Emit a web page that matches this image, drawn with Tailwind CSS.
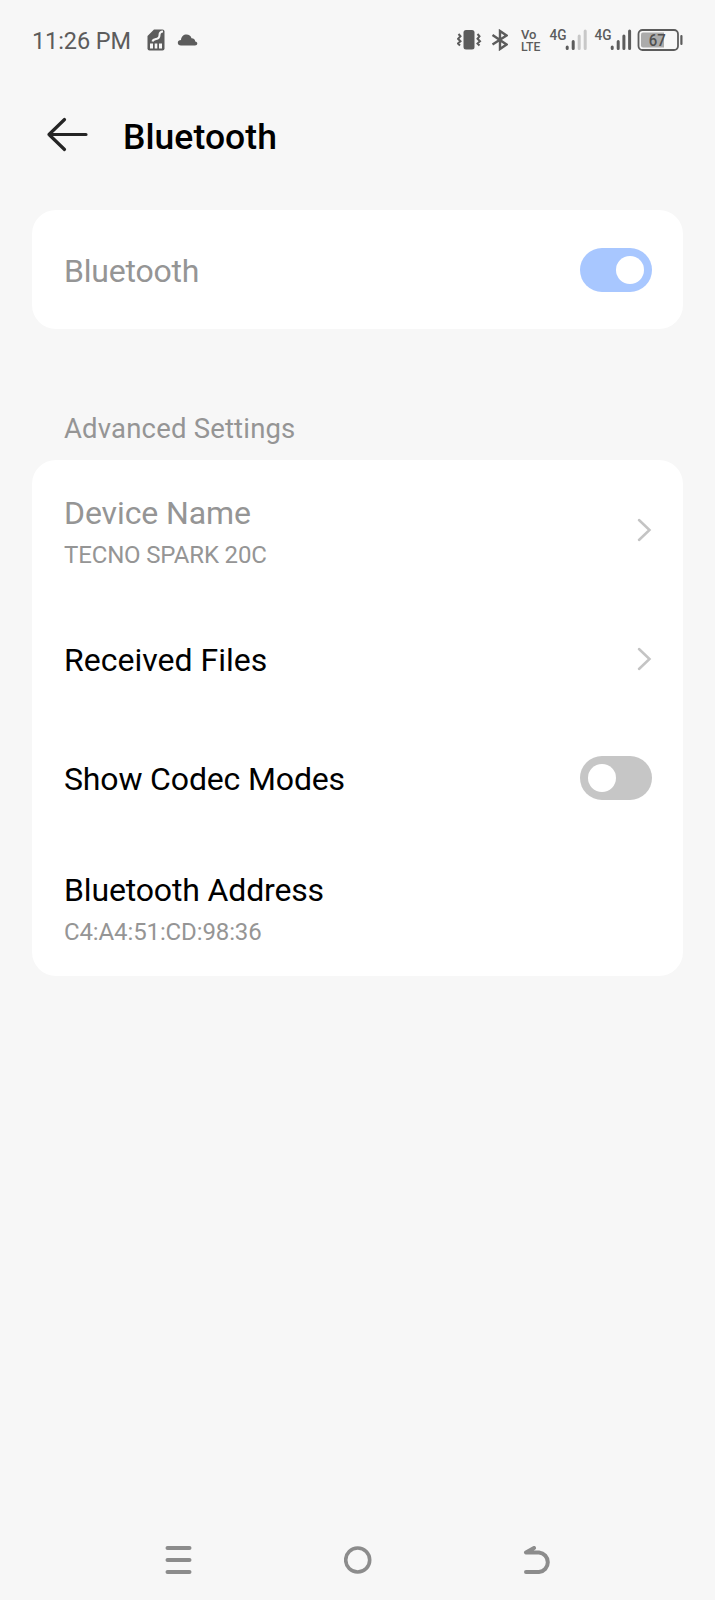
<!DOCTYPE html>
<html lang="en">
<head>
    <meta charset="UTF-8">
    <meta name="viewport" content="width=device-width, initial-scale=1.0">
    <title>Bluetooth</title>
    <script src="https://cdn.jsdelivr.net/npm/@tailwindcss/browser@4"></script>
</head>
<body class="bg-[#f7f7f7] font-[Roboto,sans-serif] text-black">
    <div class="h-[1600px] flex flex-col overflow-hidden">
        <!-- Status bar -->
        <div class="h-20 pl-8 pr-8 flex items-center text-[#5c5c5c]">
            <span class="pt-0.5 text-[23.5px] leading-8 tracking-[-0.1px] w-[115px] whitespace-nowrap">11:26 PM</span>
            <svg class="w-[18px] h-[22px]" viewBox="0 0 18 22" fill="none">
                <path d="M7 0.5H15.5Q17.5 0.5 17.5 2.5V19.5Q17.5 21.5 15.5 21.5H2.5Q0.5 21.5 0.5 19.5V7Z" fill="#5c5c5c"/>
                <path d="M16 2.500Q12.500 2.500 12.500 6Q12.500 9.500 9 10Q6 10.500 5.500 12.500" stroke="#f7f7f7" stroke-width="2"/>
                <path d="M3 14.500H6V19.500H3ZM7.700 14.500H10.300V19.500H7.700ZM12 14.500H15V19.500H12Z" fill="#f7f7f7"/>
            </svg>
            <svg class="ml-3 w-[21px] h-[12px]" viewBox="0 0 21 12" fill="#5c5c5c">
                <path d="M4 11.500C1.800 11.500 0.800 10.300 0.800 8.800C0.800 7 2.200 6 4 6C4.300 2.500 6.500 0.500 9.500 0.500C12 0.500 13.800 1.800 14.500 4.200C17 4.200 18.200 5.500 18.200 7.500C19.500 7.700 20.300 8.400 20.300 9.500C20.300 10.800 19.400 11.500 18 11.500Z"/>
            </svg>
            <div class="ml-auto flex items-center">
                <svg class="w-[25px] h-[22px]" viewBox="0 0 25 22" fill="none" stroke="#5c5c5c" stroke-width="2">
                    <rect x="6.500" y="1" width="11" height="19.500" rx="2.500" fill="#5c5c5c" stroke="none"/>
                    <path d="M1.500 5L3.500 7.300L1 9.800L3.500 12.300L1 14.500L3 16.500M20.500 5L22.500 7.300L20.500 9.800L23 12.300L20.500 14.500L22.500 16.500"/>
                </svg>
                <svg class="ml-[9px] w-[17px] h-[22px]" viewBox="0 0 17 22" fill="none" stroke="#5c5c5c" stroke-width="2.400">
                    <path d="M1.500 6L15.500 15.500L9 20V2L15.500 6.500L1.500 15.500"/>
                </svg>
                <svg class="ml-3 w-[28px] h-[32px]" viewBox="0 0 28 32" fill="#5c5c5c" font-weight="500">
                    <text x="1" y="15" font-size="13.500" textLength="15.500" lengthAdjust="spacingAndGlyphs">Vo</text>
                    <text x="1" y="26.500" font-size="13" textLength="19.500" lengthAdjust="spacingAndGlyphs">LTE</text>
                </svg>
                <svg class="ml-px w-[39px] h-[24px]" viewBox="0 0 39 24" stroke="#5c5c5c" stroke-width="3" stroke-linecap="round">
                    <text x="0.500" y="11.500" font-size="14.500" font-weight="500" fill="#5c5c5c" stroke="none" textLength="17" lengthAdjust="spacingAndGlyphs">4G</text>
                    <path d="M18.200 19V20.500M24.200 13.500V20.500"/>
                    <path stroke="#c8c8c8" d="M30.200 8V20.500M36.200 3V20.500"/>
                </svg>
                <svg class="ml-1.5 w-[39px] h-[24px]" viewBox="0 0 39 24" stroke="#5c5c5c" stroke-width="3" stroke-linecap="round">
                    <text x="0.500" y="11.500" font-size="14.500" font-weight="500" fill="#5c5c5c" stroke="none" textLength="17" lengthAdjust="spacingAndGlyphs">4G</text>
                    <path d="M18.200 19V20.500M24.200 13.500V20.500M29.900 8V20.500M35.600 3V20.500"/>
                </svg>
                <svg class="ml-1 w-[46px] h-[22px]" viewBox="0 0 46 22">
                    <rect x="1.500" y="1" width="39.500" height="20" rx="4" fill="none" stroke="#5c5c5c" stroke-width="1.800"/>
                    <path d="M6 3.500H27V18.500H6Q4 18.500 4 16.500V5.500Q4 3.500 6 3.500Z" fill="#ababab"/>
                    <rect x="43.300" y="6" width="2.200" height="10" rx="1" fill="#5c5c5c"/>
                    <text x="20.300" y="16.500" font-size="16" font-weight="500" text-anchor="middle" fill="#505050" textLength="17" lengthAdjust="spacingAndGlyphs">67</text>
                </svg>
            </div>
        </div>

        <!-- Title -->
        <div class="h-[130px] pb-5 pl-[46px] flex items-center">
            <svg class="w-[42px] h-[36px]" viewBox="0 0 42 36" fill="none" stroke="#252525" stroke-width="3.200" stroke-linecap="round" stroke-linejoin="round">
                <path d="M40 17.500H3M18.500 2.500L3 17.500L18.500 32.500"/>
            </svg>
            <h1 class="ml-[35px] pt-1 text-[35.5px] leading-10 tracking-[0.05px] font-medium">Bluetooth</h1>
        </div>

        <div class="mx-8 h-[119px] pl-8 pr-[31.5px] bg-white rounded-3xl flex items-center justify-between">
            <span class="text-[32px] leading-10 pt-0.5 tracking-[-0.2px] text-[#959595]">Bluetooth</span>
            <div class="w-[71.5px] h-11 px-2 rounded-full bg-[#a8c7ff] flex items-center justify-end">
                <div class="size-7 rounded-full bg-white"></div>
            </div>
        </div>

        <!-- Advanced settings -->
        <h2 class="mt-[84px] ml-16 h-[47px] text-[27.5px] leading-8 tracking-[0.18px] text-[#959595]">Advanced Settings</h2>
        <div class="mx-8 h-[516px] pl-8 pr-[31.5px] bg-white rounded-3xl">
            <div class="h-[140px] flex items-center justify-between">
                <div class="pt-2 text-[#959595]">
                    <p class="text-[32px] leading-[41px] tracking-[-0.1px]">Device Name</p>
                    <p class="pt-px text-[24px] leading-[41px] tracking-[-0.15px]">TECNO SPARK 20C</p>
                </div>
                <svg class="w-4 h-6" viewBox="0 0 16 24" fill="none" stroke="#c4c4c4" stroke-width="2.500" stroke-linecap="round">
                    <path d="M3 2L13.500 12L3 22"/>
                </svg>
            </div>
            <div class="h-[118px] flex items-center justify-between">
                <p class="pt-0.5 text-[32px] leading-10">Received Files</p>
                <svg class="w-4 h-6" viewBox="0 0 16 24" fill="none" stroke="#c4c4c4" stroke-width="2.500" stroke-linecap="round">
                    <path d="M3 2L13.500 12L3 22"/>
                </svg>
            </div>
            <div class="h-[120px] flex items-center justify-between">
                <p class="pt-0.5 text-[32px] leading-10 tracking-[-0.15px]">Show Codec Modes</p>
                <div class="w-[71.5px] h-11 px-2 rounded-full bg-[#c6c6c6] flex items-center">
                    <div class="size-7 rounded-full bg-white"></div>
                </div>
            </div>
            <div class="h-[138px] flex items-center">
                <div class="pt-2">
                    <p class="text-[32px] leading-[41px] tracking-[-0.15px]">Bluetooth Address</p>
                    <p class="pt-px text-[24px] leading-[41px] tracking-[-0.12px] text-[#959595]">C4:A4:51:CD:98:36</p>
                </div>
            </div>
        </div>

        <!-- Navigation bar -->
        <div class="mt-auto h-20 grid grid-cols-3 items-center justify-items-center px-[89px]">
            <svg class="w-7 h-7" viewBox="0 0 28 28" stroke="#8c8c8c" stroke-width="4" stroke-linecap="round">
                <path d="M2.500 2H24.500M2.500 14H24.500M2.500 26H24.500"/>
            </svg>
            <svg class="w-7 h-7" viewBox="0 0 28 28" fill="none" stroke="#8c8c8c" stroke-width="3.600">
                <circle cx="13.700" cy="14" r="12"/>
            </svg>
            <svg class="w-7 h-7" viewBox="0 0 28 28" fill="none" stroke="#8c8c8c" stroke-width="4" stroke-linecap="round" stroke-linejoin="round">
                <path d="M11 2L3 6.500H16A9.800 9.800 0 0 1 16 26H3"/>
            </svg>
        </div>
    </div>
</body>
</html>
